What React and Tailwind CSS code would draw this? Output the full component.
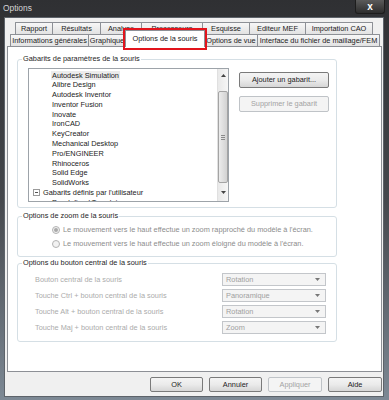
import React from 'react';

const topTabs = [
  { label: 'Rapport', w: 38 },
  { label: 'Résultats', w: 49 },
  { label: 'Analyse', w: 42 },
  { label: 'Processeurs', w: 62 },
  { label: 'Esquisse', w: 48 },
  { label: 'Editeur MEF', w: 57 },
  { label: 'Importation CAO', w: 68 },
];

const templates = [
  'Autodesk Simulation',
  'Alibre Design',
  'Autodesk Inventor',
  'Inventor Fusion',
  'Inovate',
  'IronCAD',
  'KeyCreator',
  'Mechanical Desktop',
  'Pro/ENGINEER',
  'Rhinoceros',
  'Solid Edge',
  'SolidWorks',
];

const middleButton = [
  { label: 'Bouton central de la souris', value: 'Rotation' },
  { label: 'Touche Ctrl + bouton central de la souris', value: 'Panoramique' },
  { label: 'Touche Alt + bouton central de la souris', value: 'Rotation' },
  { label: 'Touche Maj + bouton central de la souris', value: 'Zoom' },
];

const Tab = ({ label, w }) => (
  <div
    style={{ width: w }}
    className="h-full shrink-0 flex items-center justify-center border border-b-0 border-[#8d9096] -ml-px first:ml-0 bg-gradient-to-b from-[#f7f7f7] to-[#e2e2e2] text-[#1b1b1b] rounded-t-[1px]"
  >
    {label}
  </div>
);

const ArrowDown = ({ color = '#444' }) => (
  <svg width="5" height="3" viewBox="0 0 5 3">
    <path d="M0 0h5L2.5 3z" fill={color} />
  </svg>
);

const Button = ({ children, disabled, className = '' }) => (
  <div
    className={`flex items-center justify-center rounded-[2px] border ${
      disabled
        ? 'border-[#bfc3c7] bg-[#f4f4f4] text-[#a3a3a3]'
        : 'border-[#7a7a7a] bg-gradient-to-b from-[#f4f4f4] via-[#ebebeb] to-[#d6d6d6] text-[#1b1b1b]'
    } ${className}`}
  >
    {children}
  </div>
);

const Legend = ({ children }) => (
  <legend className="ml-[4px] px-[1px] leading-[10px] text-[#1e1e1e]">{children}</legend>
);

export default function App() {
  return (
    <div className="w-[389px] h-[400px] flex flex-col bg-gradient-to-b from-[#2f3033] via-[#45484d] to-[#7d8995] font-['Liberation_Sans',Arial,sans-serif] text-[7.35px] overflow-hidden">
      {/* title bar */}
      <div className="h-[17px] flex items-start justify-between">
        <span className="ml-[3px] mt-[3px] text-[8.4px] leading-[10px] text-[#d4d4d4]">Options</span>
        <div className="mr-[4px] w-[30px] h-[14px] rounded-b-[3px] border border-t-0 border-[#1d1d1d] bg-gradient-to-b from-[#5a5a5a] to-[#2e2e2e] flex items-center justify-center text-white text-[10px] font-bold leading-none">
          x
        </div>
      </div>

      {/* client area */}
      <div className="ml-[4px] mr-[5px] h-[380px] bg-[#f0f0f0] border border-[#5d636a] flex flex-col">
        {/* back tab row */}
        <div className="mt-[4px] ml-[10px] h-[12px] flex leading-[10px]">
          {topTabs.map((t) => (
            <Tab key={t.label} {...t} />
          ))}
        </div>
        {/* front tab row */}
        <div className="ml-[5px] h-[12px] flex items-end leading-[10px]">
          <Tab label="Informations générales" w={79} />
          <Tab label="Graphique" w={38} />
          <div className="relative z-10 w-[80px] h-[17px] -ml-px translate-y-[1px] shrink-0 border border-b-0 border-[#8d9096] bg-white flex items-start justify-center pt-[3px] text-[#1b1b1b]">
            Options de la souris
            <div className="absolute -left-[3px] -right-[3px] -top-[3px] -bottom-[3px] border-2 border-[#e2141c]" />
          </div>
          <Tab label="Options de vue" w={54} />
          <Tab label="Interface du fichier de maillage/FEM" w={123} />
        </div>

        {/* tab page */}
        <div className="ml-[2px] w-[375px] h-[326px] border border-[#8d9096] bg-white flex flex-col">
          {/* templates group */}
          <fieldset className="mt-[7px] ml-[9px] w-[320px] border border-[#d5dfe5] rounded-[3px] pb-[5px]">
            <Legend>Gabarits de paramètres de la souris</Legend>
            <div className="flex mt-[4px]">
              <div className="ml-[10px] w-[201px] h-[134px] border border-[#9da3a9] flex overflow-hidden">
                <div className="flex-1 pt-[1.5px] leading-[9.8px] text-[#1b1b1b] overflow-hidden">
                  {templates.map((t, i) => (
                    <div key={t} className="h-[9.8px] pl-[22px]">
                      <span className={`px-[1px] ${i === 0 ? 'bg-[#ececec]' : ''}`}>{t}</span>
                    </div>
                  ))}
                  <div className="h-[9.8px] flex items-center pl-[4px]">
                    <span className="w-[7px] h-[7px] border border-[#9a9a9a] flex items-center justify-center mr-[3px]">
                      <span className="w-[3px] h-px bg-[#555]" />
                    </span>
                    Gabarits définis par l'utilisateur
                  </div>
                  <div className="h-[9.8px] pl-[23px]">Pre-defined Templates</div>
                </div>
                {/* scrollbar */}
                <div className="w-[11px] bg-gradient-to-r from-[#e9e9e9] to-[#f6f6f6] border-l border-[#e0e0e0] flex flex-col items-center">
                  <div className="h-[12px] flex items-center">
                    <svg width="5" height="3" viewBox="0 0 5 3">
                      <path d="M0 3h5L2.5 0z" fill="#444" />
                    </svg>
                  </div>
                  <div className="mt-[10px] w-[10px] h-[92px] rounded-[2px] border border-[#a4a4a4] bg-gradient-to-r from-[#ececec] to-[#d2d2d2] flex flex-col items-center justify-center gap-[1px]">
                    <span className="w-[4px] h-px bg-[#8a8a8a]" />
                    <span className="w-[4px] h-px bg-[#8a8a8a]" />
                    <span className="w-[4px] h-px bg-[#8a8a8a]" />
                  </div>
                  <div className="flex-1 flex items-center">
                    <ArrowDown />
                  </div>
                </div>
              </div>
              <div className="ml-[10px] mt-[4px] flex flex-col gap-[8px]">
                <Button className="w-[90px] h-[16px]">Ajouter un gabarit...</Button>
                <Button disabled className="w-[90px] h-[16px]">Supprimer le gabarit</Button>
              </div>
            </div>
          </fieldset>

          {/* zoom group */}
          <fieldset className="mt-[3px] ml-[9px] w-[320px] border border-[#d5dfe5] rounded-[3px] pb-[7px]">
            <Legend>Options de zoom de la souris</Legend>
            <div className="mt-[4px] ml-[34px] flex flex-col gap-[4px] leading-[10px] text-[#8c8c8c]">
              <div className="flex items-center gap-[3px]">
                <span className="w-[8px] h-[8px] rounded-full border border-[#b3b3b3] bg-[#f2f2f2] flex items-center justify-center">
                  <span className="w-[4px] h-[4px] rounded-full bg-[#a9a9a9]" />
                </span>
                Le mouvement vers le haut effectue un zoom rapproché du modèle à l'écran.
              </div>
              <div className="flex items-center gap-[3px]">
                <span className="w-[8px] h-[8px] rounded-full border border-[#b3b3b3] bg-[#f2f2f2]" />
                Le mouvement vers le haut effectue un zoom éloigné du modèle à l'écran.
              </div>
            </div>
          </fieldset>

          {/* middle button group */}
          <fieldset className="mt-[1px] ml-[9px] w-[320px] border border-[#d5dfe5] rounded-[3px] pb-[7px]">
            <Legend>Options du bouton central de la souris</Legend>
            <div className="mt-[5px] flex flex-col gap-[3px]">
              {middleButton.map((r, i) => (
                <div key={i} className="h-[13px] flex items-center">
                  <span className="ml-[17px] flex-1 text-[#ababab]">{r.label}</span>
                  <div className="mr-[10px] w-[104px] h-[13px] border border-[#c3c6ca] bg-[#f4f4f4] flex items-center justify-between pl-[3px] pr-[5px] text-[#a0a0a0]">
                    {r.value}
                    <ArrowDown color="#777" />
                  </div>
                </div>
              ))}
            </div>
          </fieldset>
        </div>

        {/* dialog buttons */}
        <div className="mt-[5px] mr-[1px] flex justify-end gap-[6px]">
          <Button className="w-[53px] h-[15px]">OK</Button>
          <Button className="w-[53px] h-[15px]">Annuler</Button>
          <Button disabled className="w-[54px] h-[15px]">Appliquer</Button>
          <Button className="w-[54px] h-[15px]">Aide</Button>
        </div>
      </div>
    </div>
  );
}
